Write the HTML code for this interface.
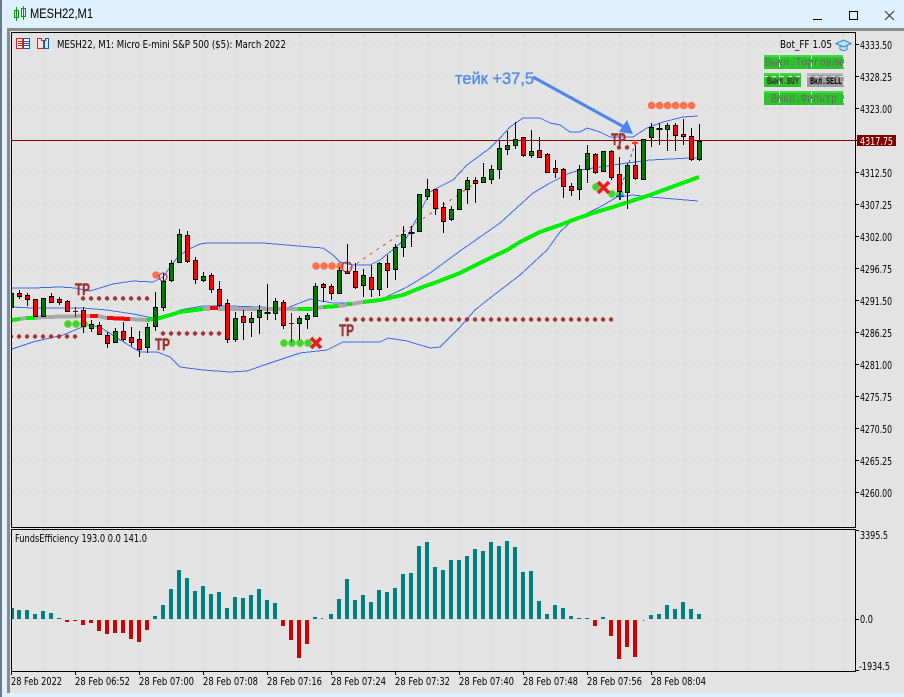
<!DOCTYPE html>
<html><head><meta charset="utf-8"><title>MESH22,M1</title>
<style>
html,body{margin:0;padding:0;background:#e3e3e3;width:904px;height:697px;overflow:hidden}
svg{display:block}
text{font-family:"DejaVu Sans","Liberation Sans",sans-serif;font-size:11px;fill:#000}
.r{fill:#f00;stroke:#000}.g{fill:#007b00;stroke:#000}
.m{font-family:"Liberation Mono",monospace;font-size:12px}
.tp{font-family:"Liberation Sans",sans-serif;font-weight:bold;font-size:17px;fill:#a03030;stroke:#a03030;stroke-width:.4}
</style></head><body>
<svg width="904" height="697" viewBox="0 0 904 697" xmlns="http://www.w3.org/2000/svg" shape-rendering="crispEdges">
<defs><clipPath id="c"><rect x="12" y="33" width="843" height="494"/></clipPath></defs>
<!-- window -->
<rect width="904" height="28" fill="#dff0ff"/>
<rect y="28" width="904" height="3" fill="#8a8a8a"/>
<rect width="2" height="697" fill="#6d7a86"/>
<rect x="2" y="0" width="5" height="697" fill="#dff0ff"/>
<rect x="7" y="28" width="3" height="665" fill="#8a8a8a"/>
<rect y="693" width="904" height="4" fill="#dff0ff"/>
<rect x="0" width="2" height="697" fill="#6d7a86"/>
<!-- title -->
<g fill="none" stroke="#0a9a0a"><path d="M16.5 7v14M23.5 6v14"/><rect x="14.5" y="10.5" width="4" height="7"/><rect x="21.5" y="8.5" width="4" height="8"/></g>
<text x="30" y="18" style="font-family:'Liberation Sans',sans-serif;font-size:14px" textLength="63" lengthAdjust="spacingAndGlyphs" fill="#000">MESH22,M1</text>
<path d="M813 19.5h9" stroke="#000" stroke-width="1"/><rect x="849.5" y="11.5" width="8" height="8" fill="none" stroke="#000"/>
<path d="M885 11L894 20M894 11L885 20" stroke="#333" shape-rendering="auto" stroke-width="1.1"/>
<!-- grid main -->
<g stroke="#d6d6d6" stroke-dasharray="4 4" fill="none">
<path d="M43.5 33V527M75.5 33V527M107.5 33V527M139.5 33V527M171.5 33V527M203.5 33V527M235.5 33V527M267.5 33V527M299.5 33V527M331.5 33V527M363.5 33V527M395.5 33V527M427.5 33V527M459.5 33V527M491.5 33V527M523.5 33V527M555.5 33V527M587.5 33V527M619.5 33V527M651.5 33V527M683.5 33V527M715.5 33V527M747.5 33V527M779.5 33V527M811.5 33V527M843.5 33V527"/>
<path d="M12 44.5H855M12 76.5H855M12 108.5H855M12 172.5H855M12 204.5H855M12 236.5H855M12 268.5H855M12 300.5H855M12 332.5H855M12 364.5H855M12 396.5H855M12 428.5H855M12 460.5H855M12 492.5H855"/>
<path d="M43.5 530V671M75.5 530V671M107.5 530V671M139.5 530V671M171.5 530V671M203.5 530V671M235.5 530V671M267.5 530V671M299.5 530V671M331.5 530V671M363.5 530V671M395.5 530V671M427.5 530V671M459.5 530V671M491.5 530V671M523.5 530V671M555.5 530V671M587.5 530V671M619.5 530V671M651.5 530V671M683.5 530V671M715.5 530V671M747.5 530V671M779.5 530V671M811.5 530V671M843.5 530V671M12 619.5H855"/>
</g>
<!-- frames -->
<g fill="none" stroke="#000">
<path d="M11.5 32.5H855.5V527.5H11.5ZM11.5 529.5H855.5V671.5H11.5Z"/>
<path d="M855 44.5h4M855 76.5h4M855 108.5h4M855 140.5h2M855 172.5h4M855 204.5h4M855 236.5h4M855 268.5h4M855 300.5h4M855 332.5h4M855 364.5h4M855 396.5h4M855 428.5h4M855 460.5h4M855 492.5h4M855 530.5h4M855 619.5h4M855 670.5h4"/>
<path d="M11.5 671v4M75.5 671v4M139.5 671v4M203.5 671v4M267.5 671v4M331.5 671v4M395.5 671v4M459.5 671v4M523.5 671v4M587.5 671v4M651.5 671v4"/>
</g>
<g clip-path="url(#c)">
<path d="M12 140.5H857" stroke="#800000" fill="none"/>
<!-- bands -->
<g fill="none" stroke="#3a6cec" stroke-width="1">
<polyline points="12,288 33,288 60,287 75,288 90,291 100,288 113,284 133,281 153,282 163,277 177,258 187,250 200,244 207,243 230,243 263,243 287,245 310,247 323,248 333,255 340,262 353,265 370,265 380,260 395,248 407,237 417,218 430,192 437,188 453,180 467,165 490,148 500,138 510,127 523,118 540,118 550,123 560,125 570,132 580,132 587,128 600,132 610,137 633,137 647,128 663,122 683,117 698,116"/>
<polyline points="12,307 33,308 83,308 107,310 133,314 153,318 165,318 180,310 203,306 230,306 287,308 310,299 333,303 360,303 380,300 407,287 430,273 460,251 500,223 533,193 550,183 570,173 580,170 600,167 620,164 650,160 690,158 698,158"/>
<polyline points="12,349 33,342 63,335 87,325 100,327 117,338 140,352 157,352 170,357 180,367 203,370 230,372 247,371 270,363 300,353 327,350 343,342 380,342 388,338 407,341 430,348 440,347 460,327 475,310 490,298 520,275 547,250 560,232 573,220 600,207 617,197 633,195 650,197 698,201"/>
</g>
<!-- MA -->
<g fill="none" stroke-width="4">
<polyline stroke="#00ee00" points="12,320 20,319"/>
<polyline stroke="#a8a8a8" points="20,319 26,318"/>
<polyline stroke="#00ee00" points="26,318 35,318"/>
<polyline stroke="#a8a8a8" points="35,318 43,317 90,316"/>
<polyline stroke="#f00" points="90,316 98,316"/>
<polyline stroke="#a8a8a8" points="98,316 107,318"/>
<polyline stroke="#f00" points="107,318 130,319"/>
<polyline stroke="#a8a8a8" points="130,319 147,320"/>
<polyline stroke="#00ee00" points="147,320 160,318 180,312 203,309"/>
<polyline stroke="#a8a8a8" points="203,309 210,309"/>
<polyline stroke="#f00" points="210,308 218,308"/>
<polyline stroke="#a8a8a8" points="218,309 298,309"/>
<polyline stroke="#00ee00" points="298,309 312,309"/>
<polyline stroke="#a8a8a8" points="312,309 323,307"/>
<polyline stroke="#00ee00" points="323,307 338,306"/>
<polyline stroke="#a8a8a8" points="338,306 347,305"/>
<polyline stroke="#00ee00" points="347,304 352,304"/>
<polyline stroke="#a8a8a8" points="352,304 363,302"/>
<polyline stroke="#00ee00" points="363,302 380,300 403,295 420,288 437,282 460,273 480,263 507,250 520,242 540,232 560,225 573,220 593,213 613,207 650,195 699,177"/>
</g>
<!-- dashed trend -->
<path d="M350 268L483 178" stroke="#e8481c" stroke-dasharray="3 5" fill="none"/>
<path d="M618 197L634 147" stroke="#2a6fd0" stroke-dasharray="3 3" fill="none"/>
<!-- dots -->
<g fill="#a52a2a" shape-rendering="auto" fill-opacity=".95">
<circle cx="83" cy="298.5" r="2.2"/><circle cx="91" cy="298.5" r="2.2"/><circle cx="99" cy="298.5" r="2.2"/><circle cx="107" cy="298.5" r="2.2"/><circle cx="115" cy="298.5" r="2.2"/><circle cx="123" cy="298.5" r="2.2"/><circle cx="131" cy="298.5" r="2.2"/><circle cx="139" cy="298.5" r="2.2"/><circle cx="147" cy="298.5" r="2.2"/>
<circle cx="11" cy="336.5" r="2.2"/><circle cx="19" cy="336.5" r="2.2"/><circle cx="27" cy="336.5" r="2.2"/><circle cx="35" cy="336.5" r="2.2"/><circle cx="43" cy="336.5" r="2.2"/><circle cx="51" cy="336.5" r="2.2"/><circle cx="59" cy="336.5" r="2.2"/><circle cx="67" cy="336.5" r="2.2"/><circle cx="75" cy="336.5" r="2.2"/>
<circle cx="163" cy="333.5" r="2.2"/><circle cx="171" cy="333.5" r="2.2"/><circle cx="179" cy="333.5" r="2.2"/><circle cx="187" cy="333.5" r="2.2"/><circle cx="195" cy="333.5" r="2.2"/><circle cx="203" cy="333.5" r="2.2"/><circle cx="211" cy="333.5" r="2.2"/><circle cx="219" cy="333.5" r="2.2"/>
<circle cx="347" cy="319.5" r="2.2"/><circle cx="355" cy="319.5" r="2.2"/><circle cx="363" cy="319.5" r="2.2"/><circle cx="371" cy="319.5" r="2.2"/><circle cx="379" cy="319.5" r="2.2"/><circle cx="387" cy="319.5" r="2.2"/><circle cx="395" cy="319.5" r="2.2"/><circle cx="403" cy="319.5" r="2.2"/><circle cx="411" cy="319.5" r="2.2"/><circle cx="419" cy="319.5" r="2.2"/><circle cx="427" cy="319.5" r="2.2"/><circle cx="435" cy="319.5" r="2.2"/><circle cx="443" cy="319.5" r="2.2"/><circle cx="451" cy="319.5" r="2.2"/><circle cx="459" cy="319.5" r="2.2"/><circle cx="467" cy="319.5" r="2.2"/><circle cx="475" cy="319.5" r="2.2"/><circle cx="483" cy="319.5" r="2.2"/><circle cx="491" cy="319.5" r="2.2"/><circle cx="499" cy="319.5" r="2.2"/><circle cx="507" cy="319.5" r="2.2"/><circle cx="515" cy="319.5" r="2.2"/><circle cx="523" cy="319.5" r="2.2"/><circle cx="531" cy="319.5" r="2.2"/><circle cx="539" cy="319.5" r="2.2"/><circle cx="547" cy="319.5" r="2.2"/><circle cx="555" cy="319.5" r="2.2"/><circle cx="563" cy="319.5" r="2.2"/><circle cx="571" cy="319.5" r="2.2"/><circle cx="579" cy="319.5" r="2.2"/><circle cx="587" cy="319.5" r="2.2"/><circle cx="595" cy="319.5" r="2.2"/><circle cx="603" cy="319.5" r="2.2"/><circle cx="611" cy="319.5" r="2.2"/>
<circle cx="619" cy="147.5" r="2.2"/><circle cx="627" cy="147.5" r="2.2"/>
</g>
<g fill="#ff7050" shape-rendering="auto">
<circle cx="651.5" cy="105.5" r="3.8"/><circle cx="659.5" cy="105.5" r="3.8"/><circle cx="667.5" cy="105.5" r="3.8"/><circle cx="675.5" cy="105.5" r="3.8"/><circle cx="683.5" cy="105.5" r="3.8"/><circle cx="691.5" cy="105.5" r="3.8"/>
<circle cx="316" cy="266" r="3.8"/><circle cx="324" cy="266" r="3.8"/><circle cx="332" cy="266" r="3.8"/><circle cx="340" cy="266" r="3.8"/>
<circle cx="156" cy="275" r="3.8"/>
</g>
<g fill="#3ed03e" stroke="#7de03a" stroke-width=".8" shape-rendering="auto">
<circle cx="284" cy="343" r="3.6"/><circle cx="292" cy="343" r="3.6"/><circle cx="300" cy="343" r="3.6"/><circle cx="308" cy="343" r="3.6"/>
<circle cx="68" cy="324" r="3.6"/><circle cx="76" cy="324" r="3.6"/><circle cx="84" cy="324" r="3.6"/>
<circle cx="596" cy="187" r="3.6"/><circle cx="612" cy="194" r="3.6"/><circle cx="620" cy="194" r="3.6"/>
</g>
<!-- candles: wicks -->
<path fill="none" stroke="#000" d="M19.5 290V299M27.5 293V306M35.5 299V316M43.5 298V316M51.5 293V303M59.5 297V305M67.5 300V311M83.5 307V333M91.5 320V332M99.5 322V334M107.5 332V348M115.5 328V343M123.5 322V341M131.5 327V346M139.5 331V357M147.5 323V353M155.5 292V331M163.5 273V311M171.5 260V282M179.5 229V263M187.5 231V263M195.5 257V284M203.5 272V282M211.5 273V293M219.5 281V307M227.5 299V343M235.5 312V342M243.5 310V340M251.5 312V337M259.5 305V334M267.5 284V320M275.5 298V320M283.5 300V329M299.5 316V340M307.5 313V329M315.5 283V317M323.5 283V302M331.5 284V300M339.5 267V294M347.5 244V274M355.5 263V289M363.5 269V297M371.5 265V297M379.5 262V296M387.5 255V288M395.5 244V280M403.5 226V257M411.5 226V247M419.5 194V232M427.5 179V200M435.5 189V215M443.5 202V233M451.5 206V221M459.5 189V209M467.5 177V204M475.5 177V203M483.5 163V183M491.5 165V184M499.5 141V179M507.5 131V155M515.5 122V149M523.5 137V157M531.5 130V158M539.5 137V158M547.5 153V173M555.5 160V178M563.5 168V198M571.5 183V196M579.5 165V200M587.5 145V183M595.5 153V174M603.5 151V172M611.5 150V180M619.5 157V200M627.5 163V209M635.5 145V180M643.5 139V180M651.5 123V147M659.5 123V145M667.5 123V151M675.5 123V151M683.5 119V145M691.5 128V161M699.5 124V161"/>
<path fill="none" stroke="#8b0000" d="M75.5 307V317M73 311.5h5M291.5 313V342M289 323.5h5"/>
<path fill="none" stroke="#000" stroke-width="1" d="M265 312.500h5v1h-5zM409 232.500h5v1h-5zM657 128.500h5v1h-5z"/>
<!-- candle bodies -->
<g>
<rect class="g" x="9.5" y="293.5" width="4" height="14"/>
<rect class="r" x="17.5" y="293.5" width="4" height="3"/><rect class="r" x="25.5" y="295.5" width="4" height="4"/><rect class="r" x="33.5" y="299.5" width="4" height="17"/><rect class="g" x="41.5" y="298.5" width="4" height="18"/><rect class="r" x="49.5" y="296.5" width="4" height="6"/><rect class="r" x="57.5" y="299.5" width="4" height="3"/><rect class="r" x="65.5" y="301.5" width="4" height="10"/>
<rect class="r" x="81.5" y="310.5" width="4" height="16"/><rect class="g" x="89.5" y="324.5" width="4" height="4"/><rect class="r" x="97.5" y="325.5" width="4" height="9"/><rect class="r" x="105.5" y="335.5" width="4" height="8"/><rect class="g" x="113.5" y="331.5" width="4" height="11"/><rect class="r" x="121.5" y="331.5" width="4" height="8"/><rect class="r" x="129.5" y="337.5" width="4" height="5"/><rect class="r" x="137.5" y="339.5" width="4" height="10"/><rect class="g" x="145.5" y="327.5" width="4" height="20"/><rect class="g" x="153.5" y="307.5" width="4" height="19"/><rect class="g" x="161.5" y="281.5" width="4" height="26"/><rect class="g" x="169.5" y="263.5" width="4" height="17"/><rect class="g" x="177.5" y="234.5" width="4" height="28"/><rect class="r" x="185.5" y="235.5" width="4" height="26"/><rect class="r" x="193.5" y="260.5" width="4" height="19"/><rect class="g" x="201.5" y="276.5" width="4" height="4"/><rect class="r" x="209.5" y="275.5" width="4" height="14"/><rect class="r" x="217.5" y="289.5" width="4" height="16"/><rect class="r" x="225.5" y="303.5" width="4" height="36"/>
<rect class="g" x="233.5" y="318.5" width="4" height="21"/><rect class="r" x="241.5" y="316.5" width="4" height="6"/><rect class="g" x="249.5" y="318.5" width="4" height="4"/><rect class="g" x="257.5" y="310.5" width="4" height="7"/><rect class="g" x="273.5" y="301.5" width="4" height="12"/><rect class="r" x="281.5" y="302.5" width="4" height="23"/><rect class="g" x="297.5" y="318.5" width="4" height="5"/><rect class="g" x="305.5" y="315.5" width="4" height="4"/><rect class="g" x="313.5" y="286.5" width="4" height="30"/><rect class="r" x="321.5" y="284.5" width="4" height="3"/><rect class="r" x="329.5" y="286.5" width="4" height="7"/><rect class="g" x="337.5" y="270.5" width="4" height="23"/><rect class="r" x="345.5" y="271.5" width="4" height="2"/><rect class="r" x="353.5" y="271.5" width="4" height="16"/><rect class="g" x="361.5" y="275.5" width="4" height="10"/><rect class="r" x="369.5" y="277.5" width="4" height="12"/><rect class="g" x="377.5" y="263.5" width="4" height="26"/><rect class="r" x="385.5" y="263.5" width="4" height="7"/><rect class="g" x="393.5" y="247.5" width="4" height="22"/><rect class="g" x="401.5" y="234.5" width="4" height="13"/>
<rect class="g" x="417.5" y="194.5" width="4" height="37"/><rect class="g" x="425.5" y="189.5" width="4" height="7"/><rect class="r" x="433.5" y="189.5" width="4" height="19"/><rect class="r" x="441.5" y="207.5" width="4" height="14"/><rect class="g" x="449.5" y="209.5" width="4" height="10"/><rect class="g" x="457.5" y="189.5" width="4" height="20"/><rect class="g" x="465.5" y="180.5" width="4" height="9"/><rect class="r" x="473.5" y="180.5" width="4" height="3"/><rect class="g" x="481.5" y="177.5" width="4" height="5"/><rect class="g" x="489.5" y="169.5" width="4" height="10"/><rect class="g" x="497.5" y="148.5" width="4" height="21"/><rect class="g" x="505.5" y="145.5" width="4" height="4"/><rect class="g" x="513.5" y="139.5" width="4" height="6"/><rect class="r" x="521.5" y="137.5" width="4" height="18"/><rect class="g" x="529.5" y="151.5" width="4" height="4"/><rect class="r" x="537.5" y="150.5" width="4" height="7"/><rect class="r" x="545.5" y="154.5" width="4" height="18"/><rect class="r" x="553.5" y="168.5" width="4" height="4"/><rect class="r" x="561.5" y="169.5" width="4" height="17"/><rect class="r" x="569.5" y="186.5" width="4" height="4"/><rect class="g" x="577.5" y="169.5" width="4" height="20"/><rect class="g" x="585.5" y="153.5" width="4" height="16"/><rect class="r" x="593.5" y="154.5" width="4" height="18"/><rect class="g" x="601.5" y="151.5" width="4" height="20"/><rect class="r" x="609.5" y="151.5" width="4" height="26"/><rect class="r" x="617.5" y="174.5" width="4" height="17"/><rect class="g" x="625.5" y="165.5" width="4" height="27"/><rect class="r" x="633.5" y="165.5" width="4" height="13"/><rect class="g" x="641.5" y="139.5" width="4" height="40"/><rect class="g" x="649.5" y="127.5" width="4" height="10"/><rect class="g" x="665.5" y="125.5" width="4" height="4"/><rect class="r" x="673.5" y="125.5" width="4" height="10"/><rect class="r" x="681.5" y="134.5" width="4" height="2"/><rect class="r" x="689.5" y="136.5" width="4" height="23"/><rect class="g" x="697.5" y="141.5" width="4" height="18"/>
</g>
<!-- X marks -->
<path d="M311 338L321 348M321 338L311 348M598 182L609 193M609 182L598 193" stroke="#f01818" stroke-width="3.6" fill="none" shape-rendering="auto"/>
<path d="M620 192v8M616 196h8" stroke="#1a3fb0" stroke-width="1.5" fill="none"/>
<path d="M632 143h6M635 140v6" stroke="#e8481c" stroke-width="1.6" fill="none"/>
<circle cx="163" cy="277" r="4" fill="none" stroke="#a52a2a" shape-rendering="auto"/><circle cx="347" cy="267" r="5" fill="none" stroke="#a52a2a" shape-rendering="auto"/>
<!-- TP -->
<text class="tp" x="75" y="295" textLength="15" lengthAdjust="spacingAndGlyphs">TP</text>
<text class="tp" x="155" y="350" textLength="15" lengthAdjust="spacingAndGlyphs">TP</text>
<text class="tp" x="339" y="336" textLength="15" lengthAdjust="spacingAndGlyphs">TP</text>
<text class="tp" x="611" y="145" textLength="15" lengthAdjust="spacingAndGlyphs">TP</text>
<!-- arrow -->
<path d="M533 77L624 127" stroke="#4c86ec" stroke-width="3" fill="none" shape-rendering="auto"/>
<path d="M633 134L619 132L627 120Z" fill="#4c86ec" shape-rendering="auto"/>
<text x="455" y="84" style="font-family:'Liberation Sans',sans-serif;font-size:17px;fill:#4f8aee;stroke:#4f8aee;stroke-width:.35" textLength="79" lengthAdjust="spacingAndGlyphs">тейк +37,5</text>
<!-- buttons -->
<rect x="764" y="55" width="80" height="14" fill="#2fc12f"/><rect x="764" y="55" width="80" height="2" fill="#43d843"/>
<rect x="764" y="73" width="37" height="14" fill="#2fc12f"/><rect x="764" y="73" width="37" height="2" fill="#43d843"/>
<rect x="807" y="73" width="37" height="14" fill="#9c9c9c"/><rect x="807" y="73" width="37" height="2" fill="#b8b8b8"/>
<rect x="764" y="91" width="80" height="14" fill="#2fc12f"/><rect x="764" y="91" width="80" height="2" fill="#43d843"/>
<text class="m" x="765" y="66" style="fill:#5c705c" textLength="79" lengthAdjust="spacingAndGlyphs">Выкл.Торговлю</text>
<text class="m" x="767" y="84" style="fill:#333;font-size:10px;font-weight:bold" textLength="32" lengthAdjust="spacingAndGlyphs">Выкл.BUY</text>
<text class="m" x="810" y="84" style="fill:#000;font-size:10px;font-weight:bold" textLength="32" lengthAdjust="spacingAndGlyphs">Вкл.SELL</text>
<text class="m" x="771" y="102" style="fill:#5c705c" textLength="66" lengthAdjust="spacingAndGlyphs">Выкл.Фильтр</text>
<path d="M779.5 55v14M779.5 73v14M779.5 91v14M811.5 55v14M811.5 91v14M843.5 55v14M843.5 73v14M843.5 91v14M764 76.500h37M807 76.500h37" stroke="#e3e3e3" stroke-dasharray="4 4" fill="none"/>
<!-- header -->
<rect x="16.5" y="38.5" width="6" height="10" fill="#fff" stroke="#e02020"/><rect x="23.5" y="38.5" width="6" height="10" fill="#fff" stroke="#1060b0"/>
<path d="M18 41.5h4M18 43.5h4M18 45.5h4" stroke="#e02020"/><path d="M24 41.5h5M24 43.5h5M24 45.5h5" stroke="#1060b0"/>
<path d="M37.5 38.5h4v2h2v8h-6z" fill="#fdd" stroke="#e02020"/><path d="M44.5 40.5h1v-2h3v10h-4z" fill="#cfe4f7" stroke="#1060b0"/>
<text x="57" y="48" textLength="229" lengthAdjust="spacingAndGlyphs">MESH22, M1:  Micro E-mini S&amp;P 500 ($5): March 2022</text>
<text x="780" y="48" textLength="52" lengthAdjust="spacingAndGlyphs">Bot_FF  1.05</text>
<path d="M836 43.5L843.5 40L851 43.5L843.5 47ZM840 46v3.500q3.500 2 7 0V46" fill="#bfe0f5" stroke="#2a85c8" shape-rendering="auto"/>
</g>
<!-- price label -->
<rect x="857" y="135" width="39" height="11" fill="#800000"/>
<text x="860" y="145" style="fill:#fff" textLength="33" lengthAdjust="spacingAndGlyphs">4317.75</text>
<!-- axis -->
<g>
<text x="860" y="49" textLength="32" lengthAdjust="spacingAndGlyphs">4333.50</text>
<text x="860" y="81" textLength="32" lengthAdjust="spacingAndGlyphs">4328.25</text>
<text x="860" y="113" textLength="32" lengthAdjust="spacingAndGlyphs">4323.00</text>
<text x="860" y="177" textLength="32" lengthAdjust="spacingAndGlyphs">4312.50</text>
<text x="860" y="209" textLength="32" lengthAdjust="spacingAndGlyphs">4307.25</text>
<text x="860" y="241" textLength="32" lengthAdjust="spacingAndGlyphs">4302.00</text>
<text x="860" y="273" textLength="32" lengthAdjust="spacingAndGlyphs">4296.75</text>
<text x="860" y="305" textLength="32" lengthAdjust="spacingAndGlyphs">4291.50</text>
<text x="860" y="337" textLength="32" lengthAdjust="spacingAndGlyphs">4286.25</text>
<text x="860" y="369" textLength="32" lengthAdjust="spacingAndGlyphs">4281.00</text>
<text x="860" y="401" textLength="32" lengthAdjust="spacingAndGlyphs">4275.75</text>
<text x="860" y="433" textLength="32" lengthAdjust="spacingAndGlyphs">4270.50</text>
<text x="860" y="465" textLength="32" lengthAdjust="spacingAndGlyphs">4265.25</text>
<text x="860" y="497" textLength="32" lengthAdjust="spacingAndGlyphs">4260.00</text>
<text x="860" y="539" textLength="28" lengthAdjust="spacingAndGlyphs">3395.5</text>
<text x="860" y="623" textLength="13" lengthAdjust="spacingAndGlyphs">0.0</text>
<text x="859" y="670" textLength="31" lengthAdjust="spacingAndGlyphs">-1934.5</text>
<text x="11" y="685" textLength="51" lengthAdjust="spacingAndGlyphs">28 Feb 2022</text>
<text x="75" y="685" textLength="55" lengthAdjust="spacingAndGlyphs">28 Feb 06:52</text>
<text x="139" y="685" textLength="55" lengthAdjust="spacingAndGlyphs">28 Feb 07:00</text>
<text x="203" y="685" textLength="55" lengthAdjust="spacingAndGlyphs">28 Feb 07:08</text>
<text x="267" y="685" textLength="55" lengthAdjust="spacingAndGlyphs">28 Feb 07:16</text>
<text x="331" y="685" textLength="55" lengthAdjust="spacingAndGlyphs">28 Feb 07:24</text>
<text x="395" y="685" textLength="55" lengthAdjust="spacingAndGlyphs">28 Feb 07:32</text>
<text x="459" y="685" textLength="55" lengthAdjust="spacingAndGlyphs">28 Feb 07:40</text>
<text x="523" y="685" textLength="55" lengthAdjust="spacingAndGlyphs">28 Feb 07:48</text>
<text x="587" y="685" textLength="55" lengthAdjust="spacingAndGlyphs">28 Feb 07:56</text>
<text x="651" y="685" textLength="55" lengthAdjust="spacingAndGlyphs">28 Feb 08:04</text>
<text x="15" y="542" textLength="132" lengthAdjust="spacingAndGlyphs">FundsEfficiency  193.0  0.0  141.0</text>
</g>
<!-- histogram -->
<path fill="#008080" d="M12 608h2V619h-2zM17 610h4V619h-4zM25 610h4V619h-4zM33 614h4V619h-4zM41 611h4V619h-4zM49 613h4V619h-4zM57 618h4V619h-4zM153 616h4V619h-4zM161 605h4V619h-4zM169 589h4V619h-4zM177 570h4V619h-4zM185 578h4V619h-4zM193 591h4V619h-4zM201 586h4V619h-4zM209 594h4V619h-4zM217 592h4V619h-4zM225 608h4V619h-4zM233 597h4V619h-4zM241 598h4V619h-4zM249 595h4V619h-4zM257 589h4V619h-4zM265 600h4V619h-4zM273 603h4V619h-4zM313 617h4V619h-4zM321 618h2V619h-2zM329 614h4V619h-4zM337 599h4V619h-4zM345 579h4V619h-4zM353 600h4V619h-4zM361 595h4V619h-4zM369 602h4V619h-4zM377 590h4V619h-4zM385 592h4V619h-4zM393 588h4V619h-4zM401 574h4V619h-4zM409 573h4V619h-4zM417 546h4V619h-4zM425 542h4V619h-4zM433 567h4V619h-4zM441 570h4V619h-4zM449 560h4V619h-4zM457 560h4V619h-4zM465 556h4V619h-4zM473 549h4V619h-4zM481 551h4V619h-4zM489 542h4V619h-4zM497 546h4V619h-4zM505 541h4V619h-4zM513 547h4V619h-4zM521 572h4V619h-4zM529 571h4V619h-4zM537 601h4V619h-4zM545 614h4V619h-4zM553 605h4V619h-4zM561 608h4V619h-4zM569 616h4V619h-4zM577 618h4V619h-4zM585 618h4V619h-4zM601 617h4V619h-4zM649 615h4V619h-4zM657 614h4V619h-4zM665 605h4V619h-4zM673 609h4V619h-4zM681 602h4V619h-4zM689 609h4V619h-4zM697 614h4V619h-4z"/>
<path fill="#cc0000" d="M65 620h4V622h-4zM73 620h4V621h-4zM81 620h4V625h-4zM89 620h4V623h-4zM97 620h4V631h-4zM105 620h4V634h-4zM113 620h4V633h-4zM121 620h4V633h-4zM129 620h4V639h-4zM137 620h4V642h-4zM145 620h4V630h-4zM281 620h4V626h-4zM289 620h4V640h-4zM297 620h4V658h-4zM305 620h4V644h-4zM593 620h4V626h-4zM609 620h4V636h-4zM617 620h4V659h-4zM625 620h4V647h-4zM633 620h4V657h-4zM643 620h1V621h-1z"/>
</svg>
</body></html>
